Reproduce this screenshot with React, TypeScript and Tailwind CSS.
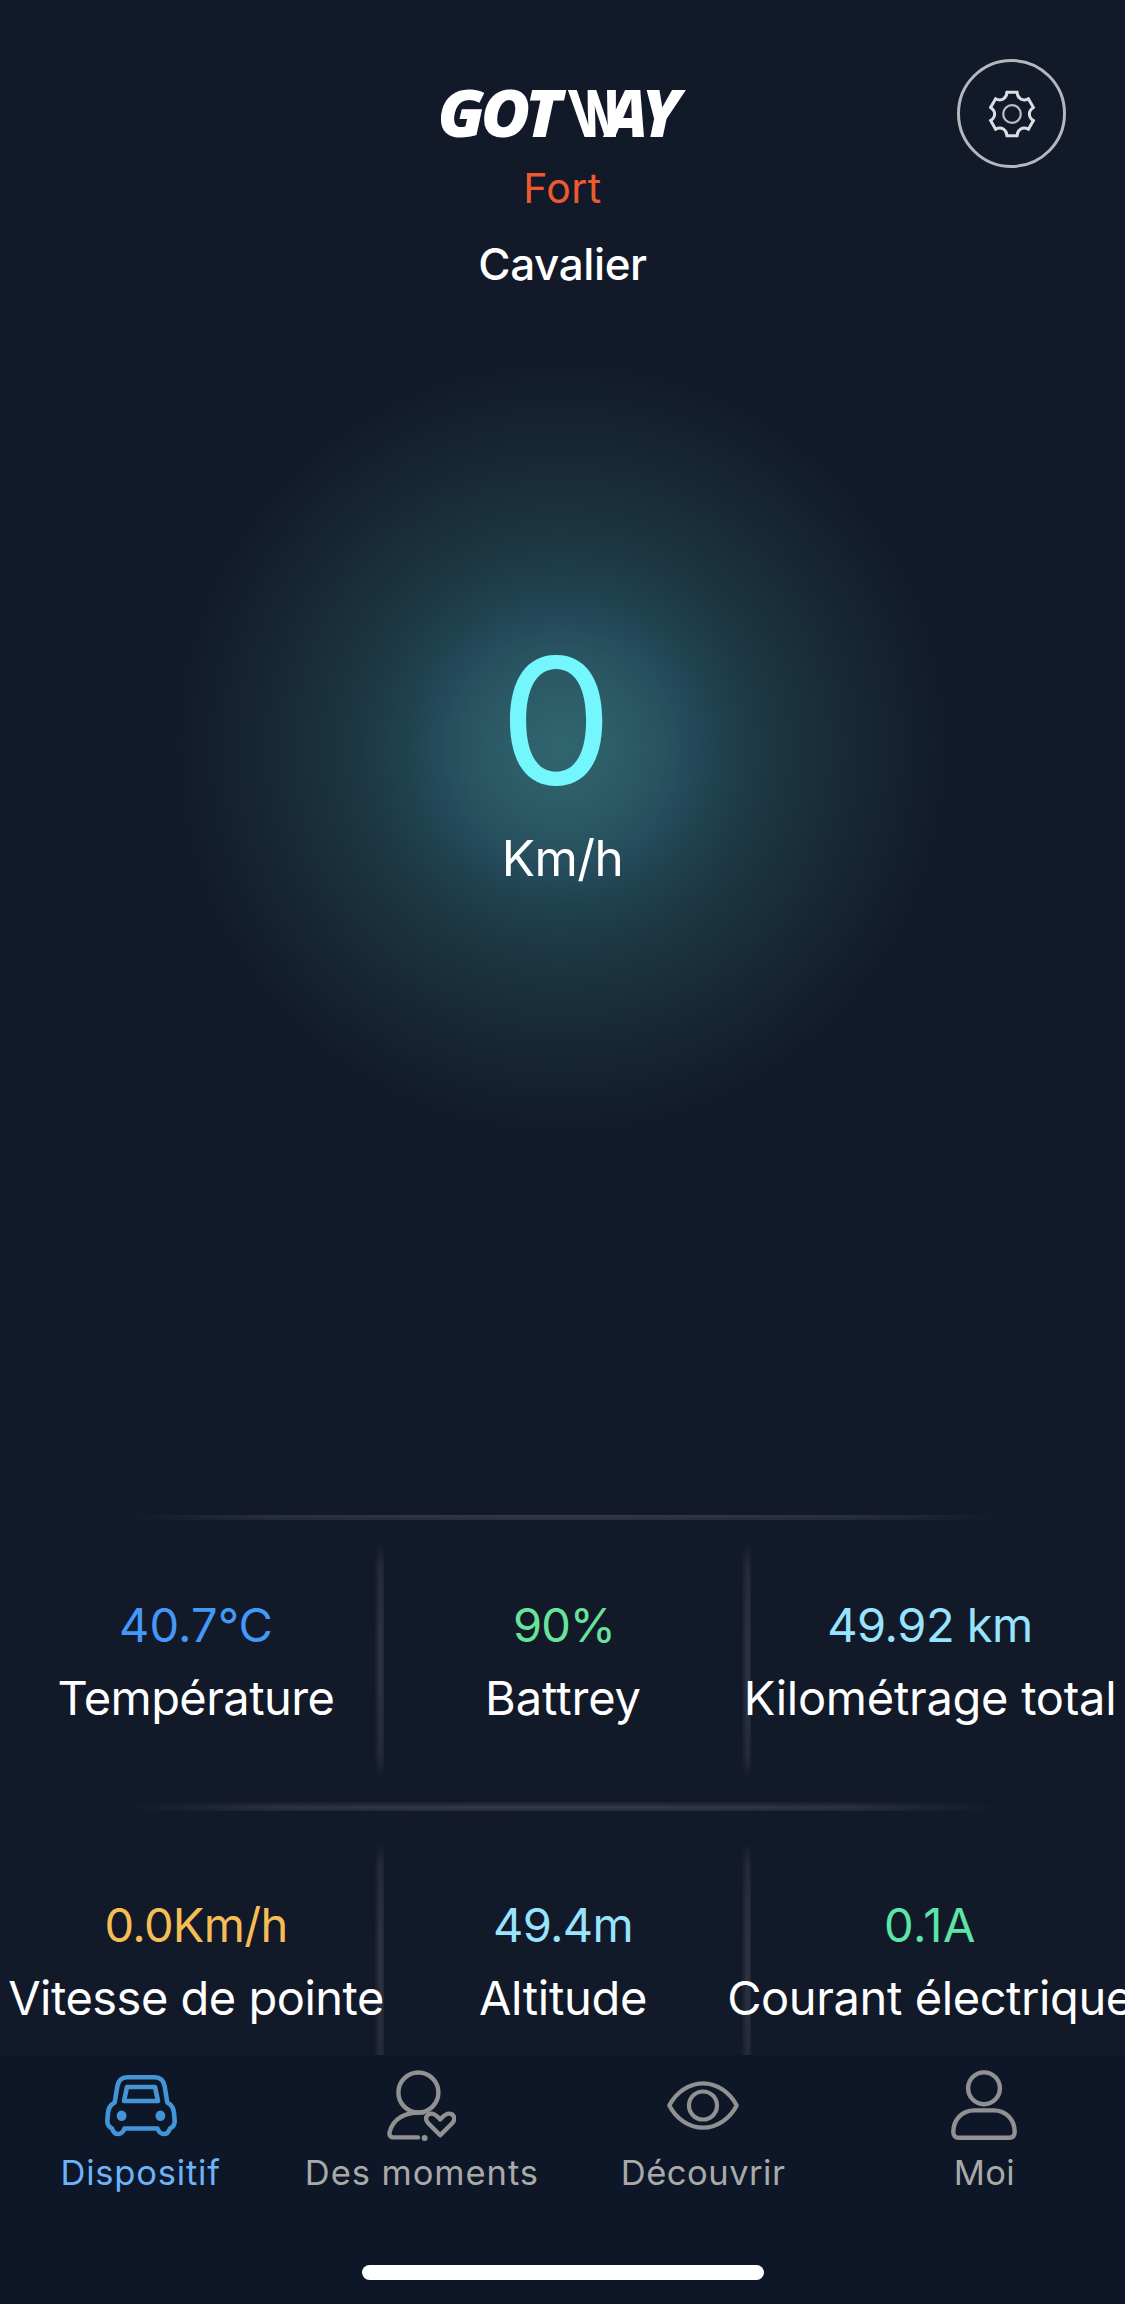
import type { FC, ReactNode } from "react"

interface Stat {
  value: string
  label: string
  valueClassName: string
  labelClassName: string
}

const tripStats: Stat[] = [
  {
    value: "40.7°C",
    label: "Température",
    valueClassName: "text-[#4398f8] tracking-[0.1px]",
    labelClassName: "tracking-[-0.56px]",
  },
  {
    value: "90%",
    label: "Battrey",
    valueClassName: "pl-0.5 text-[#68e39a] tracking-[-1px]",
    labelClassName: "tracking-[-0.1px]",
  },
  {
    value: "49.92 km",
    label: "Kilométrage total",
    valueClassName: "text-[#98e3fd] tracking-[-0.5px]",
    labelClassName: "tracking-[-0.27px]",
  },
]

const rideStats: Stat[] = [
  {
    value: "0.0Km/h",
    label: "Vitesse de pointe",
    valueClassName: "text-[#f5bd56] tracking-[-0.7px]",
    labelClassName: "tracking-[-0.5px]",
  },
  {
    value: "49.4m",
    label: "Altitude",
    valueClassName: "text-[#98e3fd] tracking-[-0.7px]",
    labelClassName: "tracking-[-0.3px]",
  },
  {
    value: "0.1A",
    label: "Courant électrique",
    valueClassName: "text-[#5ce5a8] tracking-[0.6px]",
    labelClassName: "tracking-[-0.4px]",
  },
]

export default function App() {
  return (
    <div className="flex h-[2304px] w-[1125px] flex-col overflow-hidden bg-[#121928] font-[Inter,sans-serif] text-white">
      <Header />
      <Speedometer />

      <main className="mt-[379px] flex h-[540px] shrink-0 flex-col overflow-hidden">
        <div className="mx-auto h-[5px] w-[880px] shrink-0 bg-linear-to-b from-[#353948] to-[#2a2f3e] mask-[linear-gradient(to_right,transparent,rgba(0,0,0,0.75)_18%,black_45%,black_55%,rgba(0,0,0,0.75)_82%,transparent)]" />
        <StatRow stats={tripStats} className="h-[282px]" />
        <div className="mx-auto h-[9px] w-[880px] shrink-0 bg-linear-to-b from-[#1a202f] via-[#343848] via-60% to-[#262b3a] mask-[linear-gradient(to_right,transparent,rgba(0,0,0,0.8)_18%,black_40%,black_60%,rgba(0,0,0,0.8)_82%,transparent)]" />
        <StatRow stats={rideStats} className="h-[282px] pt-[9px]" />
      </main>

      <TabBar />
    </div>
  )
}

function Header() {
  return (
    <header className="grid h-[360px] shrink-0 grid-cols-[1fr_auto_1fr]">
      <div className="col-start-2 flex flex-col items-center pt-[89px]">
        <Logo />
        <p className="mt-6 text-[41px] leading-[50px] tracking-[0.4px] text-[#ee5a30]">Fort</p>
        <h1 className="mt-[23px] text-[44px] leading-[56px] font-[450] tracking-[-0.4px]">
          Cavalier
        </h1>
      </div>
      <button
        type="button"
        className="mt-[59px] mr-[59px] flex size-[109px] items-center justify-center justify-self-end rounded-full border-3 border-[#b4b7bd]"
      >
        <GearIcon />
      </button>
    </header>
  )
}

function Speedometer() {
  return (
    <section className="flex h-[776px] shrink-0 flex-col items-center bg-[radial-gradient(circle_394px_at_562px_388px,#30666f_0%,#2c5c67_15%,#285260_26%,#24495a_33%,#20424e_40%,#1c3642_53%,#182937_72%,#14202f_88%,#121928_100%)]">
      <div className="mt-[270px] mr-3 scale-x-[1.03] text-[175px] leading-[180px] font-[430] text-[#74f7fc]">
        0
      </div>
      <div className="mt-[18px] text-[49.5px] leading-[60px] tracking-[-0.6px]">Km/h</div>
    </section>
  )
}

const StatRow: FC<{ stats: Stat[]; className: string }> = ({ stats, className }) => (
  <div className={`flex shrink-0 pl-[12.5px] ${className}`}>
    {stats.map((stat, i) => (
      <div key={stat.label} className="flex shrink-0">
        {i > 0 && <Divider />}
        <div className="relative z-10 flex w-[367px] flex-col items-center pt-[75px] text-[47px] leading-[60px] whitespace-nowrap">
          <span className={stat.valueClassName}>{stat.value}</span>
          <span className={`mt-[13px] ${stat.labelClassName}`}>{stat.label}</span>
        </div>
      </div>
    ))}
  </div>
)

const Divider = () => (
  <div className="-mx-[4.5px] mt-[22px] h-[238px] w-[9px] bg-linear-to-r from-[#181e2d] via-[#2f3444] via-60% to-[#232838] mask-[linear-gradient(to_bottom,transparent,rgba(0,0,0,0.7)_10%,black_40%,black_60%,rgba(0,0,0,0.7)_90%,transparent)]" />
)

function TabBar() {
  return (
    <nav className="flex h-[249px] shrink-0 flex-col items-center bg-[#0e1727]">
      <div className="grid h-[210px] w-full shrink-0 grid-cols-4">
        <Tab icon={<CarIcon />} label="Dispositif" className="tracking-[0.8px] text-[#6db3fa]" />
        <Tab
          icon={<MomentsIcon />}
          label="Des moments"
          className="tracking-[0.95px] text-[#a9a9aa]"
        />
        <Tab icon={<EyeIcon />} label="Découvrir" className="tracking-[0.5px] text-[#a9a9aa]" />
        <Tab icon={<PersonIcon />} label="Moi" className="tracking-[0.4px] text-[#a9a9aa]" />
      </div>
      <div className="h-[15px] w-[402px] rounded-full bg-white" />
    </nav>
  )
}

const Tab: FC<{ icon: ReactNode; label: string; className: string }> = ({
  icon,
  label,
  className,
}) => (
  <button type="button" className="flex flex-col items-center pt-[15px]">
    <span className="flex h-[71px] items-center">{icon}</span>
    <span className={`mt-[10px] text-[34.5px] leading-[44px] ${className}`}>{label}</span>
  </button>
)

const Logo = () => (
  <svg
    width="245"
    height="50"
    viewBox="0 0 245 50"
    className="overflow-visible fill-white font-['Open_Sans',sans-serif] text-[66px] font-[760] italic"
  >
    <text transform="translate(-2.4 47.8) scale(1.03 1)">G</text>
    <text transform="translate(40.8 47.8) scale(1.02 1)">O</text>
    <text transform="translate(84.8 47.8) scale(1.03 1)">T</text>
    {/* the W leans backwards into the A */}
    <text
      transform="translate(135.6 47.8) skewX(10) scale(.72 1)"
      className="font-extrabold not-italic"
    >
      W
    </text>
    <text transform="translate(166.5 47.8) scale(.93 1)">A</text>
    <text transform="translate(201.5 47.8) scale(.98 1)">Y</text>
  </svg>
)

const GearIcon = () => (
  <svg
    width="50"
    height="50"
    viewBox="-25 -25 50 50"
    fill="none"
    stroke="#dcdee1"
    strokeWidth="3"
    strokeLinecap="round"
  >
    {[0, 60, 120, 180, 240, 300].map((angle) => (
      <path
        key={angle}
        d="M-5 -21.8 H5 C5.4 -15.4 10.6 -12.4 16.4 -15.2"
        transform={`rotate(${angle})`}
      />
    ))}
    <circle r="8.8" strokeWidth="2.3" stroke="#b9bcc2" />
  </svg>
)

const CarIcon = () => (
  <svg
    width="72"
    height="62"
    viewBox="0 0 72 62"
    fill="none"
    stroke="#4494d8"
    strokeWidth="4.6"
    strokeLinejoin="round"
  >
    <path d="M22 2.3 H50 C56 2.3 58.5 5.5 59.6 11 L62.3 27.5 C67 30 68.6 33 69 38 L69.7 46 C69.7 50 68 52 65 53.5 C63.5 58 61.5 59 58.8 59 C55.5 59 54 57.5 52.5 53.5 H19.5 C18 57.5 16.5 59 13.2 59 C10.5 59 8.5 58 7 53.5 C4 52 2.3 50 2.3 46 L3 38 C3.4 33 5 30 9.7 27.5 L12.4 11 C13.5 5.5 16 2.3 22 2.3 Z" />
    <path d="M22 12 H50 L53 26 H19 Z" />
    <ellipse cx="16.6" cy="40.7" rx="4.9" ry="5.2" fill="#4494d8" stroke="none" />
    <ellipse cx="55.4" cy="40.7" rx="4.9" ry="5.2" fill="#4494d8" stroke="none" />
  </svg>
)

const MomentsIcon = () => (
  <svg
    width="69"
    height="71"
    viewBox="0 0 69 71"
    fill="none"
    stroke="#919191"
    strokeWidth="4.4"
    strokeLinecap="round"
    strokeLinejoin="round"
  >
    <circle cx="31.4" cy="22.5" r="20" />
    <path d="M36 42.6 C19 41.5 5.5 48.5 2.4 63 C2.3 65.8 3.8 67.4 6.3 67.4 H31" />
    <circle cx="37.6" cy="68" r="3" fill="#919191" stroke="none" />
    <path d="M53.2 65.3 L41 53 C37.2 48.5 39.5 43.6 44.5 43.6 C48 43.6 50 46 53.2 49.4 C56.4 46 58.4 43.6 61.9 43.6 C66.9 43.6 69 48.5 65.4 53 Z" />
  </svg>
)

const EyeIcon = () => (
  <svg
    width="72"
    height="49"
    viewBox="0 0 72 49"
    fill="none"
    stroke="#919191"
    strokeWidth="4.2"
    strokeLinejoin="round"
  >
    <path d="M2.3 24.5 C9 11.5 22 2.3 36 2.3 S63 11.5 69.7 24.5 C63 37.5 50 46.7 36 46.7 S9 37.5 2.3 24.5 Z" />
    <circle cx="36" cy="24.5" r="14" />
  </svg>
)

const PersonIcon = () => (
  <svg
    width="66"
    height="71"
    viewBox="0 0 66 71"
    fill="none"
    stroke="#919191"
    strokeWidth="4.4"
    strokeLinejoin="round"
  >
    <circle cx="33" cy="18.3" r="15.9" />
    <path d="M23.5 40.4 H42.5 C55.5 40.4 63.7 50 63.7 62 C63.7 65.5 62 67.7 58 67.7 H8 C4 67.7 2.3 65.5 2.3 62 C2.3 50 10.5 40.4 23.5 40.4 Z" />
  </svg>
)
